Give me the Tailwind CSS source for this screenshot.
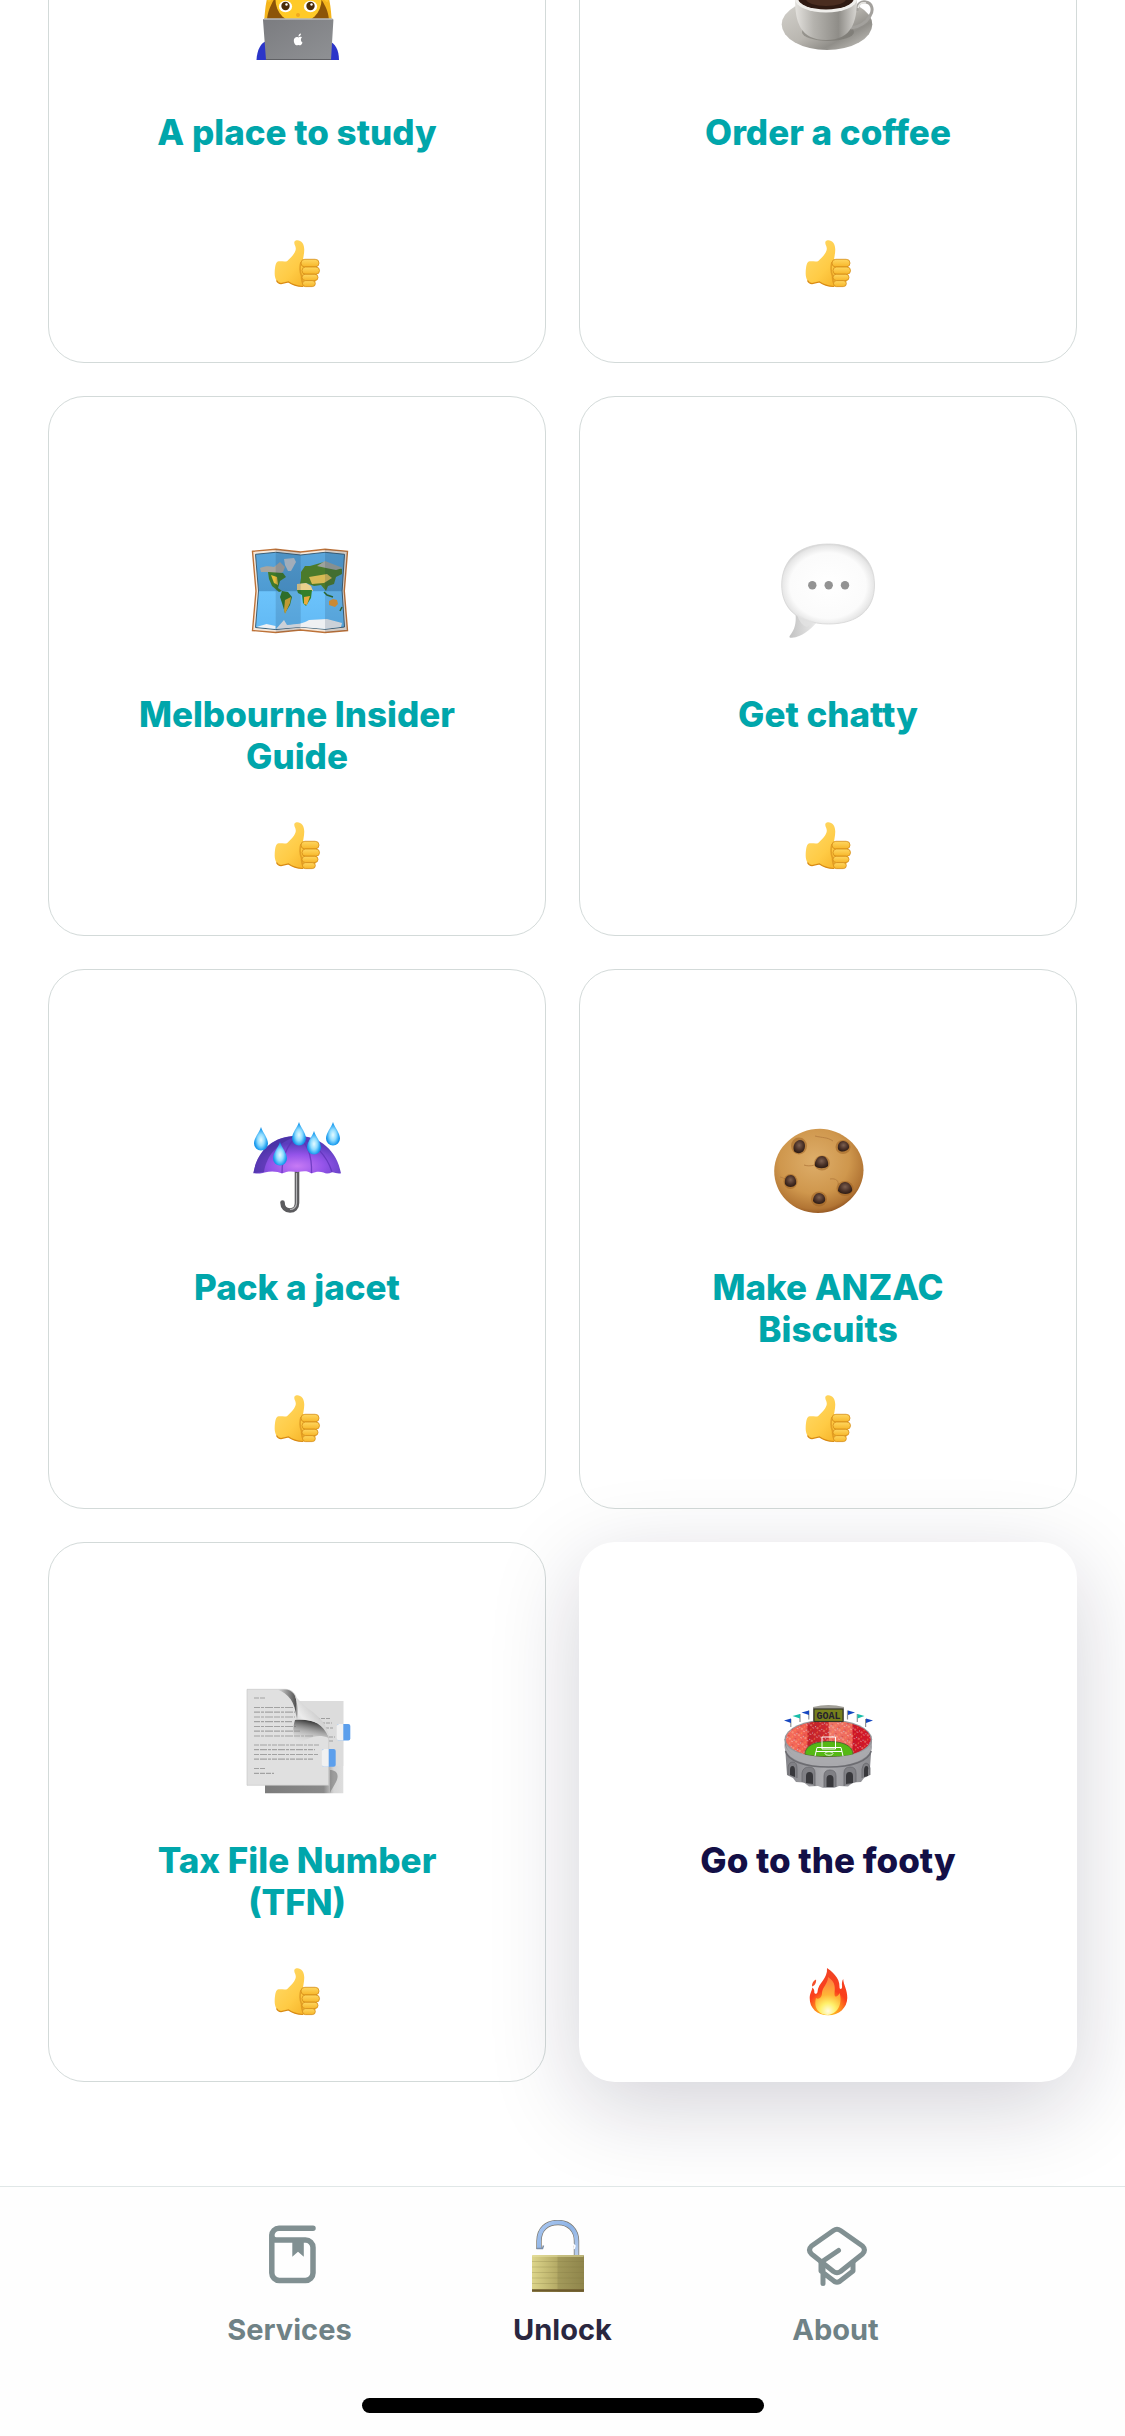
<!DOCTYPE html>
<html lang="en">
<head>
<meta charset="utf-8">
<meta name="viewport" content="width=device-width, initial-scale=1">
<title>Unlock</title>
<script src="https://cdn.jsdelivr.net/npm/@tailwindcss/browser@4"></script>
</head>
<body class="bg-white font-['Inter',sans-serif]">

<!-- Shared symbols and gradients -->
<svg class="absolute size-0" aria-hidden="true">
  <defs>
    <linearGradient id="skin" x1="0" y1="0" x2="1" y2="1"><stop offset="0" stop-color="#ffdc6e"/><stop offset=".55" stop-color="#ffcb45"/><stop offset="1" stop-color="#f2a91c"/></linearGradient>
    <linearGradient id="finger" x1="0" y1="0" x2="0" y2="1"><stop offset="0" stop-color="#ffd75f"/><stop offset="1" stop-color="#f7b62a"/></linearGradient>
    <linearGradient id="laptop" x1="0" y1="0" x2="1" y2="1"><stop offset="0" stop-color="#7b7c80"/><stop offset="1" stop-color="#8f9194"/></linearGradient>
    <linearGradient id="cup" x1="0" y1="0" x2="1" y2="0"><stop offset="0" stop-color="#e4e2de"/><stop offset=".3" stop-color="#b5b3ae"/><stop offset=".7" stop-color="#8f8d88"/><stop offset="1" stop-color="#d8d6d2"/></linearGradient>
    <linearGradient id="saucer" x1="0" y1="0" x2="1" y2="1"><stop offset="0" stop-color="#d6d4cf"/><stop offset=".5" stop-color="#b9b6b0"/><stop offset=".72" stop-color="#908e89"/><stop offset="1" stop-color="#d0cec9"/></linearGradient>
    <linearGradient id="sea" x1="0" y1="0" x2="0" y2="1"><stop offset="0" stop-color="#5aa6dc"/><stop offset=".5" stop-color="#4e9bd2"/><stop offset=".51" stop-color="#6cc3fb"/><stop offset="1" stop-color="#62b9f4"/></linearGradient>
    <radialGradient id="bubble" cx=".5" cy=".52" r=".54"><stop offset="0" stop-color="#fff"/><stop offset=".76" stop-color="#fbfbfb"/><stop offset=".92" stop-color="#e6e6e6"/><stop offset="1" stop-color="#cbcbcb"/></radialGradient>
    <linearGradient id="tail" x1="0" y1="0" x2="1" y2="0"><stop offset="0" stop-color="#c2c2c2"/><stop offset="1" stop-color="#ececec"/></linearGradient>
    <radialGradient id="canopy" cx=".5" cy=".8" r=".6"><stop offset="0" stop-color="#c77af5"/><stop offset=".5" stop-color="#9554ea"/><stop offset="1" stop-color="#5a3dbd"/></radialGradient>
    <radialGradient id="drop" cx=".5" cy=".55" r=".6"><stop offset="0" stop-color="#e6fbff"/><stop offset=".4" stop-color="#8fdcff"/><stop offset=".75" stop-color="#1b9df0"/><stop offset="1" stop-color="#0a78d0"/></radialGradient>
    <radialGradient id="cookie" cx=".45" cy=".38" r=".65"><stop offset="0" stop-color="#deae6a"/><stop offset=".6" stop-color="#cf974d"/><stop offset=".88" stop-color="#b27534"/><stop offset="1" stop-color="#8a4d1c"/></radialGradient>
    <radialGradient id="chip" cx=".5" cy=".4" r=".6"><stop offset="0" stop-color="#7c5f50"/><stop offset=".6" stop-color="#4b3228"/><stop offset="1" stop-color="#2e1c14"/></radialGradient>
    <linearGradient id="backpage" x1="0" y1="0" x2="1" y2="0"><stop offset="0" stop-color="#7c7c7c"/><stop offset=".75" stop-color="#8a8a8a"/><stop offset=".88" stop-color="#d6d6d6"/><stop offset="1" stop-color="#dedede"/></linearGradient>
    <linearGradient id="curl" x1="0" y1="1" x2="1" y2="0"><stop offset="0" stop-color="#b5b5b5"/><stop offset=".35" stop-color="#ececec"/><stop offset=".6" stop-color="#cfcfcf"/><stop offset="1" stop-color="#9a9a9a"/></linearGradient>
    <linearGradient id="underleft" x1="0" y1="0" x2="1" y2="0"><stop offset="0" stop-color="#e0e0e0"/><stop offset="1" stop-color="#4e4e4e"/></linearGradient>
    <linearGradient id="underlow" x1="0" y1="1" x2=".3" y2="0"><stop offset=".1" stop-color="#e0e0e0" stop-opacity="0"/><stop offset="1" stop-color="#3c3c3c"/></linearGradient>
    <linearGradient id="wall" x1="0" y1="0" x2="1" y2="0"><stop offset="0" stop-color="#85858a"/><stop offset=".45" stop-color="#ababaf"/><stop offset="1" stop-color="#8b8b90"/></linearGradient>
    <linearGradient id="stand" x1="0" y1="0" x2="1" y2="0"><stop offset="0" stop-color="#f5705f"/><stop offset=".25" stop-color="#f05a4e"/><stop offset=".26" stop-color="#c41f28"/><stop offset=".5" stop-color="#cf2a30"/><stop offset=".51" stop-color="#f0786a"/><stop offset=".78" stop-color="#ee6558"/><stop offset=".79" stop-color="#cc1426"/><stop offset="1" stop-color="#d4182a"/></linearGradient>
    <pattern id="crowd" width="7" height="7" patternUnits="userSpaceOnUse" patternTransform="rotate(24)"><circle cx="1" cy="1" r=".7" fill="#ffd9a8"/><circle cx="4" cy="2.500" r=".5" fill="#fff"/><circle cx="2.500" cy="5" r=".6" fill="#ffae4a"/><circle cx="6" cy="5.500" r=".5" fill="#a8323c"/><circle cx="5.500" cy=".6" r=".5" fill="#b9d6ee"/></pattern>
    <radialGradient id="flame" gradientUnits="userSpaceOnUse" cx="24" cy="43" r="42"><stop offset="0" stop-color="#ffd21c"/><stop offset=".3" stop-color="#ff8a1e"/><stop offset=".5" stop-color="#fb3f1c"/><stop offset="1" stop-color="#f04426"/></radialGradient>
    <radialGradient id="flamecore" gradientUnits="userSpaceOnUse" cx="24" cy="43" r="36"><stop offset="0" stop-color="#fffbe0"/><stop offset=".22" stop-color="#fff06a"/><stop offset=".45" stop-color="#ffb637"/><stop offset="1" stop-color="#ff7040"/></radialGradient>
    <linearGradient id="brass" x1="0" y1="0" x2="1" y2="0"><stop offset="0" stop-color="#ddd58a"/><stop offset=".48" stop-color="#b5ab66"/><stop offset=".5" stop-color="#a39a5b"/><stop offset="1" stop-color="#8f854b"/></linearGradient>
    <linearGradient id="steel" x1="0" y1="0" x2="1" y2="1"><stop offset="0" stop-color="#a9c6ef"/><stop offset=".5" stop-color="#8db3e6"/><stop offset="1" stop-color="#b9cdea"/></linearGradient>

    <symbol id="thumb" viewBox="0 0 48 48">
      <path d="M21.500 1.500C23-.3 27-.3 29.500 3c2.300 3.500 2 8 1 13.500L30 19.500l14 3v14L41 46l-11 .5c-6-.4-11-2-14.500-4.600L8 43.600c-4-.6-6.600-5-6.300-11 .2-5 .8-9.600 2.600-10.900 2.700-.9 6.700.3 9.700-.4C18 17.500 22.500 13 22.800 9c.1-3-2.300-5-1.300-7.500Z" fill="url(#skin)"/>
      <path d="M3.500 40.500c1 2 2.800 3 4.500 3.100l7.500-1.700C19 44.500 24 46.100 30 46.500" fill="none" stroke="#d98a12" stroke-width="1.200"/>
      <path d="M28 22c-1.500 5-1 10 .5 14 0 4 .5 7 2.500 9" fill="none" stroke="#d8901c" stroke-width="1.600" opacity=".7"/>
      <g fill="url(#finger)" stroke="#d58d18" stroke-width=".8"><rect x="28" y="19.300" width="18" height="7.600" rx="3.800"/><rect x="29" y="27" width="17.500" height="7.200" rx="3.600"/><rect x="29" y="34.300" width="16" height="6.200" rx="3.100"/><rect x="29.500" y="40.600" width="12.800" height="6" rx="3"/></g>
    </symbol>
    <symbol id="raindrop" viewBox="0 0 14 24"><path d="M7 0C8.500 5 14 11 14 16.500a7 7 0 0 1-14 0C0 11 5.500 5 7 0Z" fill="url(#drop)"/></symbol>
  </defs>
</svg>

<div class="flex h-screen flex-col overflow-hidden">

  <main class="flex min-h-0 flex-1 flex-col justify-end">
    <div class="grid shrink-0 grid-cols-2 gap-[33px] px-12 pb-[104px]">

      <button type="button" class="flex h-[540px] flex-col items-center justify-end rounded-[36px] border border-[#d3dad9] pb-[74px] text-[#00a6ab]">
        <svg class="size-[120px] shrink-0" viewBox="0 0 120 120" aria-hidden="true">
          <path d="M19.500 106C20 96 24 88 30 87h62c6 2 10 9 10 19Z" fill="#2b35c9"/>
          <path d="M27 68C29 52 27 22 61 16c34 6 32 36 34 52Z" fill="#f5b51c"/>
          <path d="M30 66c1-12 6-18 12-30h36c8 12 13 18 14 30Z" fill="#8c5408"/>
          <ellipse cx="61.500" cy="46" rx="23" ry="23" fill="#ffca28"/>
          <path d="M31 47c5-4 9-8 13-16M91 47c-6-4-10-8-13-16" stroke="#ffc52a" stroke-width="3" fill="none"/>
          <ellipse cx="48.500" cy="52.500" rx="6.600" ry="5.800" fill="#fff"/><ellipse cx="73.500" cy="52.500" rx="6.600" ry="5.800" fill="#fff"/>
          <circle cx="48.500" cy="52" r="4.200" fill="#4a2c08"/><circle cx="73.500" cy="52" r="4.200" fill="#4a2c08"/>
          <circle cx="49.500" cy="50.500" r="1.200" fill="#fff"/><circle cx="74.500" cy="50.500" r="1.200" fill="#fff"/>
          <circle cx="61" cy="61" r="2" fill="#f0a81e"/>
          <path d="M27 65h68.500q1 0 .9 1L94 106H29L26 66q0-1 1-1Z" fill="url(#laptop)"/>
          <path d="M27 65h68.500" stroke="#b9babd" stroke-width="1.500"/><path d="M29 105.500h65" stroke="#5f6064"/>
          <path d="M65 83.300c-1.500-.8-2.700-.3-3.700.1-.9-.4-2.200-.6-3.300.3-2 1.600-1.200 5.700.8 7.400.8.600 1.600 0 2.500-.1 1 .1 1.800.7 2.600 0 .8-.7 1.300-1.600 1.600-2.600-2-.9-2-4-.5-5.100Zm-3.600-.8c0-1.700 1-2.800 2.500-3.100.1 1.600-.9 2.900-2.500 3.100Z" fill="#fff"/>
        </svg>
        <h2 class="mt-[37px] h-[84px] w-[340px] text-[35px] leading-[42px] font-extrabold">A place to study</h2>
        <svg class="mt-[45px] size-12 shrink-0" aria-hidden="true"><use href="#thumb"/></svg>
      </button>

      <button type="button" class="flex h-[540px] flex-col items-center justify-end rounded-[36px] border border-[#d3dad9] pb-[74px] text-[#00a6ab]">
        <svg class="size-[120px] shrink-0" viewBox="0 0 120 120" aria-hidden="true">
          <ellipse cx="59" cy="70.500" rx="45.300" ry="25.500" fill="url(#saucer)"/>
          <ellipse cx="60" cy="78" rx="26" ry="9" fill="#6f6d68" opacity=".5"/>
          <path d="M89 57c0-8 5-10 9-9 6 1 8 8 4 14-4 7-12 11-19 12" fill="none" stroke="#a3a19d" stroke-width="3"/>
          <path d="M90 54c1-4 4-6 8-5" fill="none" stroke="#e8e7e4" stroke-width="1.500"/>
          <path d="M27 44c0 22 4 42 31 42s31-20 31-42Z" fill="url(#cup)"/>
          <ellipse cx="58" cy="45" rx="31" ry="13.500" fill="#efeeeb"/>
          <ellipse cx="58" cy="44" rx="28" ry="11.500" fill="#2f1a12"/>
          <ellipse cx="58" cy="45" rx="20" ry="7" fill="#4a2d20"/>
        </svg>
        <h2 class="mt-[37px] h-[84px] w-[340px] text-[35px] leading-[42px] font-extrabold">Order a coffee</h2>
        <svg class="mt-[45px] size-12 shrink-0" aria-hidden="true"><use href="#thumb"/></svg>
      </button>

      <button type="button" class="flex h-[540px] flex-col items-center justify-end rounded-[36px] border border-[#d3dad9] pb-[65px] text-[#00a6ab]">
        <svg class="size-[120px] shrink-0" viewBox="0 0 120 120" aria-hidden="true">
          <path d="M15.500 15.300 38.700 13.300 63.700 16 88 13.300l22.500 2-3.200 39.700 3.200 39.500L88 96.500 63.700 94l-25 2.500-23.200-2L19 55Z" fill="#f6e9dc" stroke="#bd7238" stroke-width="1.400"/>
          <path d="M18.500 18.300 38.700 16.300 63.700 19 88 16.300l19.500 2-2.400 36.700 2.400 36L88 93.300 63.700 91l-25 2.500-20.200-2L21.500 55Z" fill="url(#sea)" stroke="#3e6076" stroke-width="1"/>
          <path d="M39 93l8-9 3 5c10-1 16-1 22-5l18-1 15 4-1 4-16 2-24-2Z" fill="#eef0f2"/><path d="M19.500 91l10-3 9 2v3Z" fill="#eef0f2"/>
          <path d="M23 32c5-2 9-2 14-1l6-5 5 5-2 5-6 3-10-3-6 0Z" fill="#a8a59f"/>
          <path d="M47 23l10-1 2 4-5 9-3 0-3-6Z" fill="#bcc5ce"/>
          <path d="M31 36l15 1 3 4-6 4-2 7 4 3-3 1-7-6-3-7Z" fill="#3f7a28"/><path d="M34 39l6 2 1 8-4-2Z" fill="#e5bd3b"/>
          <path d="M45 55l6 1 4 5-2 8-5 8-3-10-2-6Z" fill="#337a22"/><path d="M48 64l6-3-1 6-5 11-1-4Z" fill="#dfae2f"/>
          <path d="M64 36l4-6 5 0 14-4 18 7v5l-6 3-2 7-6 2-2 5-5-6-7 1-8-3-6 1 1-6Z" fill="#4b7a2b"/><path d="M80 30l8-5 18 7-7 2-10-2Z" fill="#9da29d"/>
          <path d="M72 41l18-3 5 4-8 5-12 1Z" fill="#d8ba55"/>
          <path d="M60 48l9-1 5 3 2 5-16 0Z" fill="#ead08c"/><path d="M60 54l15 0-1 8-5 8-3-3-1-8-4-2Z" fill="#35802a"/><path d="M67 61l6-1-3 9-3-1Z" fill="#e9ab3a"/>
          <path d="M92 65l4-2 4 1 1 4-3 3-6-2Z" fill="#ee9a2f"/><path d="M87 56l3 3 6 2M103 75l2-4" stroke="#2e6c2d" stroke-width="1.500" fill="none"/>
          <path d="M38.700 13.300 63.700 16v78l-25 2.500ZM88 13.300l22.500 2-3.200 39.700 3.200 39.500L88 96.500Z" fill="#16344f" opacity=".16"/>
        </svg>
        <h2 class="mt-[37px] h-[84px] w-[340px] text-[35px] leading-[42px] font-extrabold">Melbourne Insider Guide</h2>
        <svg class="mt-[45px] size-12 shrink-0" aria-hidden="true"><use href="#thumb"/></svg>
      </button>

      <button type="button" class="flex h-[540px] flex-col items-center justify-end rounded-[36px] border border-[#d3dad9] pb-[65px] text-[#00a6ab]">
        <svg class="size-[120px] shrink-0" viewBox="0 0 120 120" aria-hidden="true">
          <path d="M27.500 78c1 9-1 16-5.500 21.500-1.500 2 0 2.500 2 2.300C34 101 42 94 49 86Z" fill="url(#tail)"/>
          <path d="M60.500 8C90 8 106.500 24 106.500 49c0 24-16 39-46 39-4 0-8-.3-12-1C24 83 13.700 68 13.700 49 13.700 24 31 8 60.500 8Z" fill="url(#bubble)" stroke="#d6d6d6" stroke-width=".8"/>
          <path d="M29 78c4 3 10 6 18 8l-8 5c-4-1-8-5-10-13Z" fill="#e2e2e2" opacity=".8"/>
          <g fill="#939393"><circle cx="44.300" cy="49.300" r="4.200"/><circle cx="60.700" cy="49.300" r="4.200"/><circle cx="77" cy="49.300" r="4.200"/></g>
        </svg>
        <h2 class="mt-[37px] h-[84px] w-[340px] text-[35px] leading-[42px] font-extrabold">Get chatty</h2>
        <svg class="mt-[45px] size-12 shrink-0" aria-hidden="true"><use href="#thumb"/></svg>
      </button>

      <button type="button" class="flex h-[540px] flex-col items-center justify-end rounded-[36px] border border-[#d3dad9] pb-[65px] text-[#00a6ab]">
        <svg class="size-[120px] shrink-0" viewBox="0 0 120 120" aria-hidden="true">
          <path d="M60 62v32c0 5-3 7.500-7 7.500s-7.500-3-7.500-8" fill="none" stroke="#5b5b5e" stroke-width="4.600" stroke-linecap="round"/>
          <path d="M59.500 64v30c0 4-3 6.500-6.500 6.500" fill="none" stroke="#b5b5b8" stroke-width="1.200"/>
          <path d="M16.300 64.300C20 42 36 26.700 59.700 26.700S100 42 104 64.300c-3 .8-6-.6-9-1-3 1.400-6 2-8.500.2-4-1.500-8-1-12 1-4-3-8-2.600-14-1.500-6-1-11-1-15.500 1.500-4-1.800-10-3-17.500-1-4 1.500-7 1-11.200.8Z" fill="url(#canopy)"/>
          <path d="M60 27C40 34 30 46 27 63l-10.500 1C20 42 36 27 60 27Z" fill="#3b2a94" opacity=".5"/>
          <path d="M60 27C50 36 45 48 45 64M60 27c12 8 15 22 14.500 37M60 27c20 8 30 20 35 36" fill="none" stroke="#5a2fb4" stroke-width="1.300" opacity=".7"/>
          <use href="#raindrop" x="17" y="18" width="14" height="24"/><use href="#raindrop" x="36" y="33" width="14" height="24"/><use href="#raindrop" x="55" y="13" width="14" height="24"/><use href="#raindrop" x="70" y="22" width="14" height="24"/><use href="#raindrop" x="89" y="13" width="14" height="24"/>
        </svg>
        <h2 class="mt-[37px] h-[84px] w-[340px] text-[35px] leading-[42px] font-extrabold">Pack a jacet</h2>
        <svg class="mt-[45px] size-12 shrink-0" aria-hidden="true"><use href="#thumb"/></svg>
      </button>

      <button type="button" class="flex h-[540px] flex-col items-center justify-end rounded-[36px] border border-[#d3dad9] pb-[65px] text-[#00a6ab]">
        <svg class="size-[120px] shrink-0" viewBox="0 0 120 120" aria-hidden="true">
          <path d="M52 19.700c20 0 43.500 16 43.500 41.500C95.500 82 76 104 50 104 24 104 6 84 6.200 62 6.500 38 28 19.700 52 19.700Z" fill="url(#cookie)"/>
          <path d="M12 68c8 2 12 6 14 10M47 27c8 2 12 1 18 5M36 56c6 2 10 0 14-1M62 70c6-1 9 2 8 6" stroke="#b98142" stroke-width="1" fill="none"/>
          <g fill="#9a5f22" opacity=".5"><ellipse cx="31" cy="37" rx="8" ry="8.500"/><ellipse cx="75" cy="38" rx="7.500" ry="7"/><ellipse cx="54" cy="54" rx="8" ry="7.500"/><ellipse cx="22.500" cy="72.500" rx="7" ry="7.500"/><ellipse cx="77" cy="79.500" rx="8.500" ry="7.500"/><ellipse cx="51" cy="90" rx="8" ry="7.500"/></g>
          <g fill="url(#chip)"><path d="M26 42c-2-6 2-11 6-11 5 0 6 6 4 10-2 4-8 4-10 1Z"/><path d="M70 40c-1-5 2-8 5-8 4 0 7 4 6 7-2 4-9 5-11 1Z"/><path d="M47 57c-1-5 3-10 7-10s7 5 6 10c-3 3-10 3-13 0Z"/><path d="M17 75c-1-6 2-9 6-9 3 0 6 4 5 9-2 4-9 4-11 0Z"/><path d="M70 82c0-5 3-9 7-9s8 5 7 9c-2 4-11 4-14 0Z"/><path d="M45 92c0-5 3-8 6-8 4 0 7 4 6 8-2 4-10 4-12 0Z"/></g>
        </svg>
        <h2 class="mt-[37px] h-[84px] w-[340px] text-[35px] leading-[42px] font-extrabold">Make ANZAC Biscuits</h2>
        <svg class="mt-[45px] size-12 shrink-0" aria-hidden="true"><use href="#thumb"/></svg>
      </button>

      <button type="button" class="flex h-[540px] flex-col items-center justify-end rounded-[36px] border border-[#d3dad9] pb-[65px] text-[#00a6ab]">
        <svg class="size-[120px] shrink-0" viewBox="0 0 120 120" aria-hidden="true">
          <path d="M28 19h78.300v92.300H28Z" fill="url(#backpage)"/><path d="M60 19h46.300v65H90Z" fill="#dcdcdc"/>
          <path d="M79 36.500h14M84 41h11M88 46h8M92 55h6M92 59h5" stroke="#9d9d9d" stroke-width="1.200" stroke-dasharray="4 1"/>
          <path d="M10 7.300h38c7 0 12 5 12 14v16c12 0 31 2 31.700 20v46H10Z" fill="#e0e0e0" stroke="#c4c4c4" stroke-width=".6"/>
          <g stroke="#a2a2a2" stroke-width="1.200"><path d="M17 16h12" stroke-dasharray="5 1"/><path d="M17 25.500h40M17 30.200h41M17 35h41M17 39.700h38M17 44.500h42M17 49.200h46M17 54h60" stroke-dasharray="6 1 3 1 8 1"/><path d="M17 63h65M17 67.700h61M17 72.500h64M17 77.200h60" stroke-dasharray="5 1 7 1 3 1"/><path d="M17 86.500h12M17 91.300h20" stroke-dasharray="5 1"/></g>
          <path d="M40 7.600h8c7 .2 11.500 5 11.500 14V36C58 20 52 12 40 7.600Z" fill="url(#underleft)"/>
          <path d="M58 38c16-1 32 3 33.500 18-11-5-20 0-31 6-5-8-5-16-2.500-24Z" fill="url(#underlow)"/>
          <path d="M58 14c4 4 9 10 15 14 8 6 18 14 18.500 27C86 42 76 37 60 37.500c1-7 1-16-2-23.500Z" fill="url(#curl)"/>
          <path d="M93 88c6 0 10 4 6 12-2 4-5 8-6 11Z" fill="#777" opacity=".6"/>
          <rect x="100" y="42" width="13.300" height="16.500" rx="2" fill="#5c9fec"/><path d="M106.300 42v16.500H102q-2.300 0-2.300-2.500V44.500q0-2.500 2.300-2.500Z" fill="#f1f1f1"/>
          <rect x="85" y="67" width="13.700" height="17.700" rx="2" fill="#5c9fec"/><path d="M91.700 67v17.700H87q-2.200 0-2.200-2.500V69.500Q84.800 67 87 67Z" fill="#f1f1f1"/>
        </svg>
        <h2 class="mt-[37px] h-[84px] w-[340px] text-[35px] leading-[42px] font-extrabold">Tax File Number (TFN)</h2>
        <svg class="mt-[45px] size-12 shrink-0" aria-hidden="true"><use href="#thumb"/></svg>
      </button>

      <!-- The next activity to unlock -->
      <button type="button" class="flex h-[540px] flex-col items-center justify-end rounded-[36px] bg-white pb-[66px] text-[#130f46] shadow-[0_24px_90px_rgba(20,15,50,0.19)]">
        <svg class="size-[120px] shrink-0" viewBox="0 0 120 120" aria-hidden="true">
          <path d="M16.500 57h87.600l-2.600 36-5.500 3-3 4-8 .5-5 4-9-.5-5 2h-11l-5-2-9 .5-5-4-8-.5-3-4-6-3Z" fill="url(#wall)"/>
          <path d="M16.500 60c0 11 19 20 44 20s43.500-9 43.500-20v5c-1 11-20 19.500-43.500 19.500S17.500 76 16.500 65Z" fill="#a9a9ad"/>
          <path d="M17.500 69C20 79 37 85 60.500 85s40-6 42.700-16" fill="none" stroke="#6c6c71" stroke-width="1.500"/>
          <g fill="#808085" stroke="#68686d" stroke-width=".8"><path d="M34 100V91q1-6 7-6t6 6v13M56 105V94q0-6 6-6t6 6v11M76 104V91q0-6 6-6t6 6v9M20 93v-8q1-5 5-5t4 7v9M94 96v-9q1-6 4-6t4 5v7"/></g>
          <g fill="#38383c"><path d="M38 101V94q0-4 3.500-4t3.500 4v8ZM58.500 105v-8q0-4 3.500-4t3.500 4v8ZM78 102v-8q0-4 3.500-4t3.500 4v7ZM22 93v-5q0-4 2.500-4t2.500 5v6ZM96 95v-6q0-5 2.500-5t1.500 4v6Z"/></g>
          <ellipse cx="60.300" cy="57.500" rx="43.800" ry="20" fill="#97979b"/>
          <ellipse cx="60.300" cy="57" rx="42.500" ry="18.500" fill="url(#stand)"/><ellipse cx="60.300" cy="57" rx="42.500" ry="18.500" fill="url(#crowd)"/>
          <path d="M37 72.500C37 64 46 59.500 61 59.500s24 5 24 13C78 75.500 46 75.500 37 72.500Z" fill="#55b815" stroke="#4d6b31" stroke-width="1"/>
          <path d="M18 62c4 8 20 13 42.500 13S98 70 103 62c0 11-18 19-42.500 19S18 72 18 62Z" fill="#aaaaae"/>
          <path d="M47 74l2-8.500h24l2 8.500M48 69.500h26M54 67v-12h13.500v12Z" fill="none" stroke="#fff" stroke-width="1"/><ellipse cx="61" cy="71.500" rx="4" ry="1.800" fill="none" stroke="#fff" stroke-width=".8"/>
          <path d="M45 25q15.500-4 31 0v15H45Z" fill="#a19f97"/><rect x="46" y="27" width="29" height="12.500" fill="#77801c" stroke="#34342a" stroke-width="1.200"/>
          <text x="60.500" y="36.500" text-anchor="middle" font-family="Liberation Mono, monospace" font-weight="700" font-size="10" fill="#23212e">GOAL</text>
          <path d="M22.800 37v8M32 32v8M40.800 28.500v9M79.500 28.500v9M89.300 32v8M97.600 37v8" stroke="#8f9396" stroke-width="1.200"/>
          <path d="M23 36.500v4.500l-7-2.500ZM41 28.500v4.500l-7.500-2.500ZM98 36.500v4.500l7-2.500ZM80 28.500v4.500l7-2.500Z" fill="#1747c0"/><path d="M32 32v4.500L24.500 34ZM89.500 32v4.500l7-2.500Z" fill="#17bda9"/>
        </svg>
        <h2 class="mt-[37px] h-[84px] w-[340px] text-[35px] leading-[42px] font-extrabold">Go to the footy</h2>
        <svg class="mt-[45px] size-12 shrink-0" viewBox="0 0 48 48" aria-hidden="true">
          <path d="M23 0c4 3 13 9 12.500 19-.2 3 3.200 2.500 2.500-1-.2-3 0-5 1.200-7 .3 6 4.300 11 4.100 19C43 40 35 47.300 24.300 47.300 13 47.300 5.500 40 5.700 30 5.800 25 8 23 8.300 19.500c2 1.500 2 3 2 5 .5 2 3 1.500 3.200-.8C14 15 24 11 23 0Z" fill="url(#flame)"/>
          <path d="M24 9c8 5 7 11 6.500 17 0 4 3.500 3 5-1 3 8 0 21-12 22C12 46 10 37 12 30c3 2 6-1 6-5 .2-6 6-9 6-16Z" fill="url(#flamecore)"/>
          <path d="M12 11.500c.5 3-1 6-4 7-.2-3 1-5.500 4-7Z" fill="#f4502c"/>
        </svg>
      </button>
    </div>
  </main>

  <nav class="relative flex shrink-0 flex-col items-center border-t border-[#e0e7e7] bg-[#fefefe] pt-[33px] pb-[23px] text-[#6f8286]">
    <div class="flex justify-center">
      <a href="#services" class="flex w-[273px] flex-col items-center gap-5">
        <svg class="size-[72px]" viewBox="0 0 72 72" fill="none" stroke="#819092" stroke-width="5.500" aria-hidden="true">
          <path d="M59 8.300H25a7.200 7.200 0 0 0-7.200 7.200V53a7.500 7.500 0 0 0 7.500 7.500h26.200A7.500 7.500 0 0 0 59 53V27.500a7.500 7.500 0 0 0-7.500-7.500H22c-3 0-4.200-2-4.200-5" stroke-linecap="round"/>
          <path d="M38.300 20v16.700l5.700-5 5.800 5V20Z" fill="#819092" stroke="none"/>
        </svg>
        <span class="text-[29px] leading-9 font-bold">Services</span>
      </a>
      <a href="#unlock" aria-current="page" class="flex w-[273px] flex-col items-center gap-5 text-[#2a2740]">
        <svg class="size-[72px]" viewBox="0 0 72 72" aria-hidden="true">
          <path d="M12 29V21C12 9 20 2.500 31 2.500S49.500 10 49.500 21v15" fill="none" stroke="#7c776c" stroke-width="5.400"/>
          <path d="M12 28V21C12 9 20 2.500 31 2.500S49.500 10 49.500 21v15" fill="none" stroke="url(#steel)" stroke-width="4"/>
          <path d="M9.500 28.500h6l1-3" fill="none" stroke="#7b8ea8" stroke-width="1.500"/><path d="M46 24l2 2-1 3" fill="none" stroke="#fff" stroke-width="1.500"/>
          <rect x="5" y="35" width="52" height="37" rx="1" fill="url(#brass)"/>
          <path d="M5 41.500h52M5 47h52M5 52.500h52M5 58h52M5 63.500h52" stroke="#7f7640" stroke-width=".8" opacity=".3"/>
          <path d="M5 70.500h52" stroke="#6d5a2d" stroke-width="2.500"/><path d="M5.500 36h51" stroke="#ebe5a8" stroke-width="1"/>
        </svg>
        <span class="text-[29px] leading-9 font-bold">Unlock</span>
      </a>
      <a href="#about" class="flex w-[273px] flex-col items-center gap-5">
        <svg class="size-[72px]" viewBox="0 0 72 72" fill="none" stroke="#819092" stroke-width="5" stroke-linecap="round" stroke-linejoin="round" aria-hidden="true">
          <path d="M33.500 10.500 11.500 26q-4 4 0 8L33.500 51.500q3.500 2.500 7 0L62.500 34q4-4 0-8L40.500 10.500q-3.500-2.500-7 0Z"/>
          <path d="M38.500 30.500 23 41M53 43v8L39.500 61.500q-2.500 1.500-5 0L21 51v-8M23 42v21.500"/>
        </svg>
        <span class="text-[29px] leading-9 font-bold">About</span>
      </a>
    </div>
    <div class="mt-[50px] h-[15px] w-[402px] rounded-full bg-black"></div>
  </nav>
</div>
</body>
</html>
